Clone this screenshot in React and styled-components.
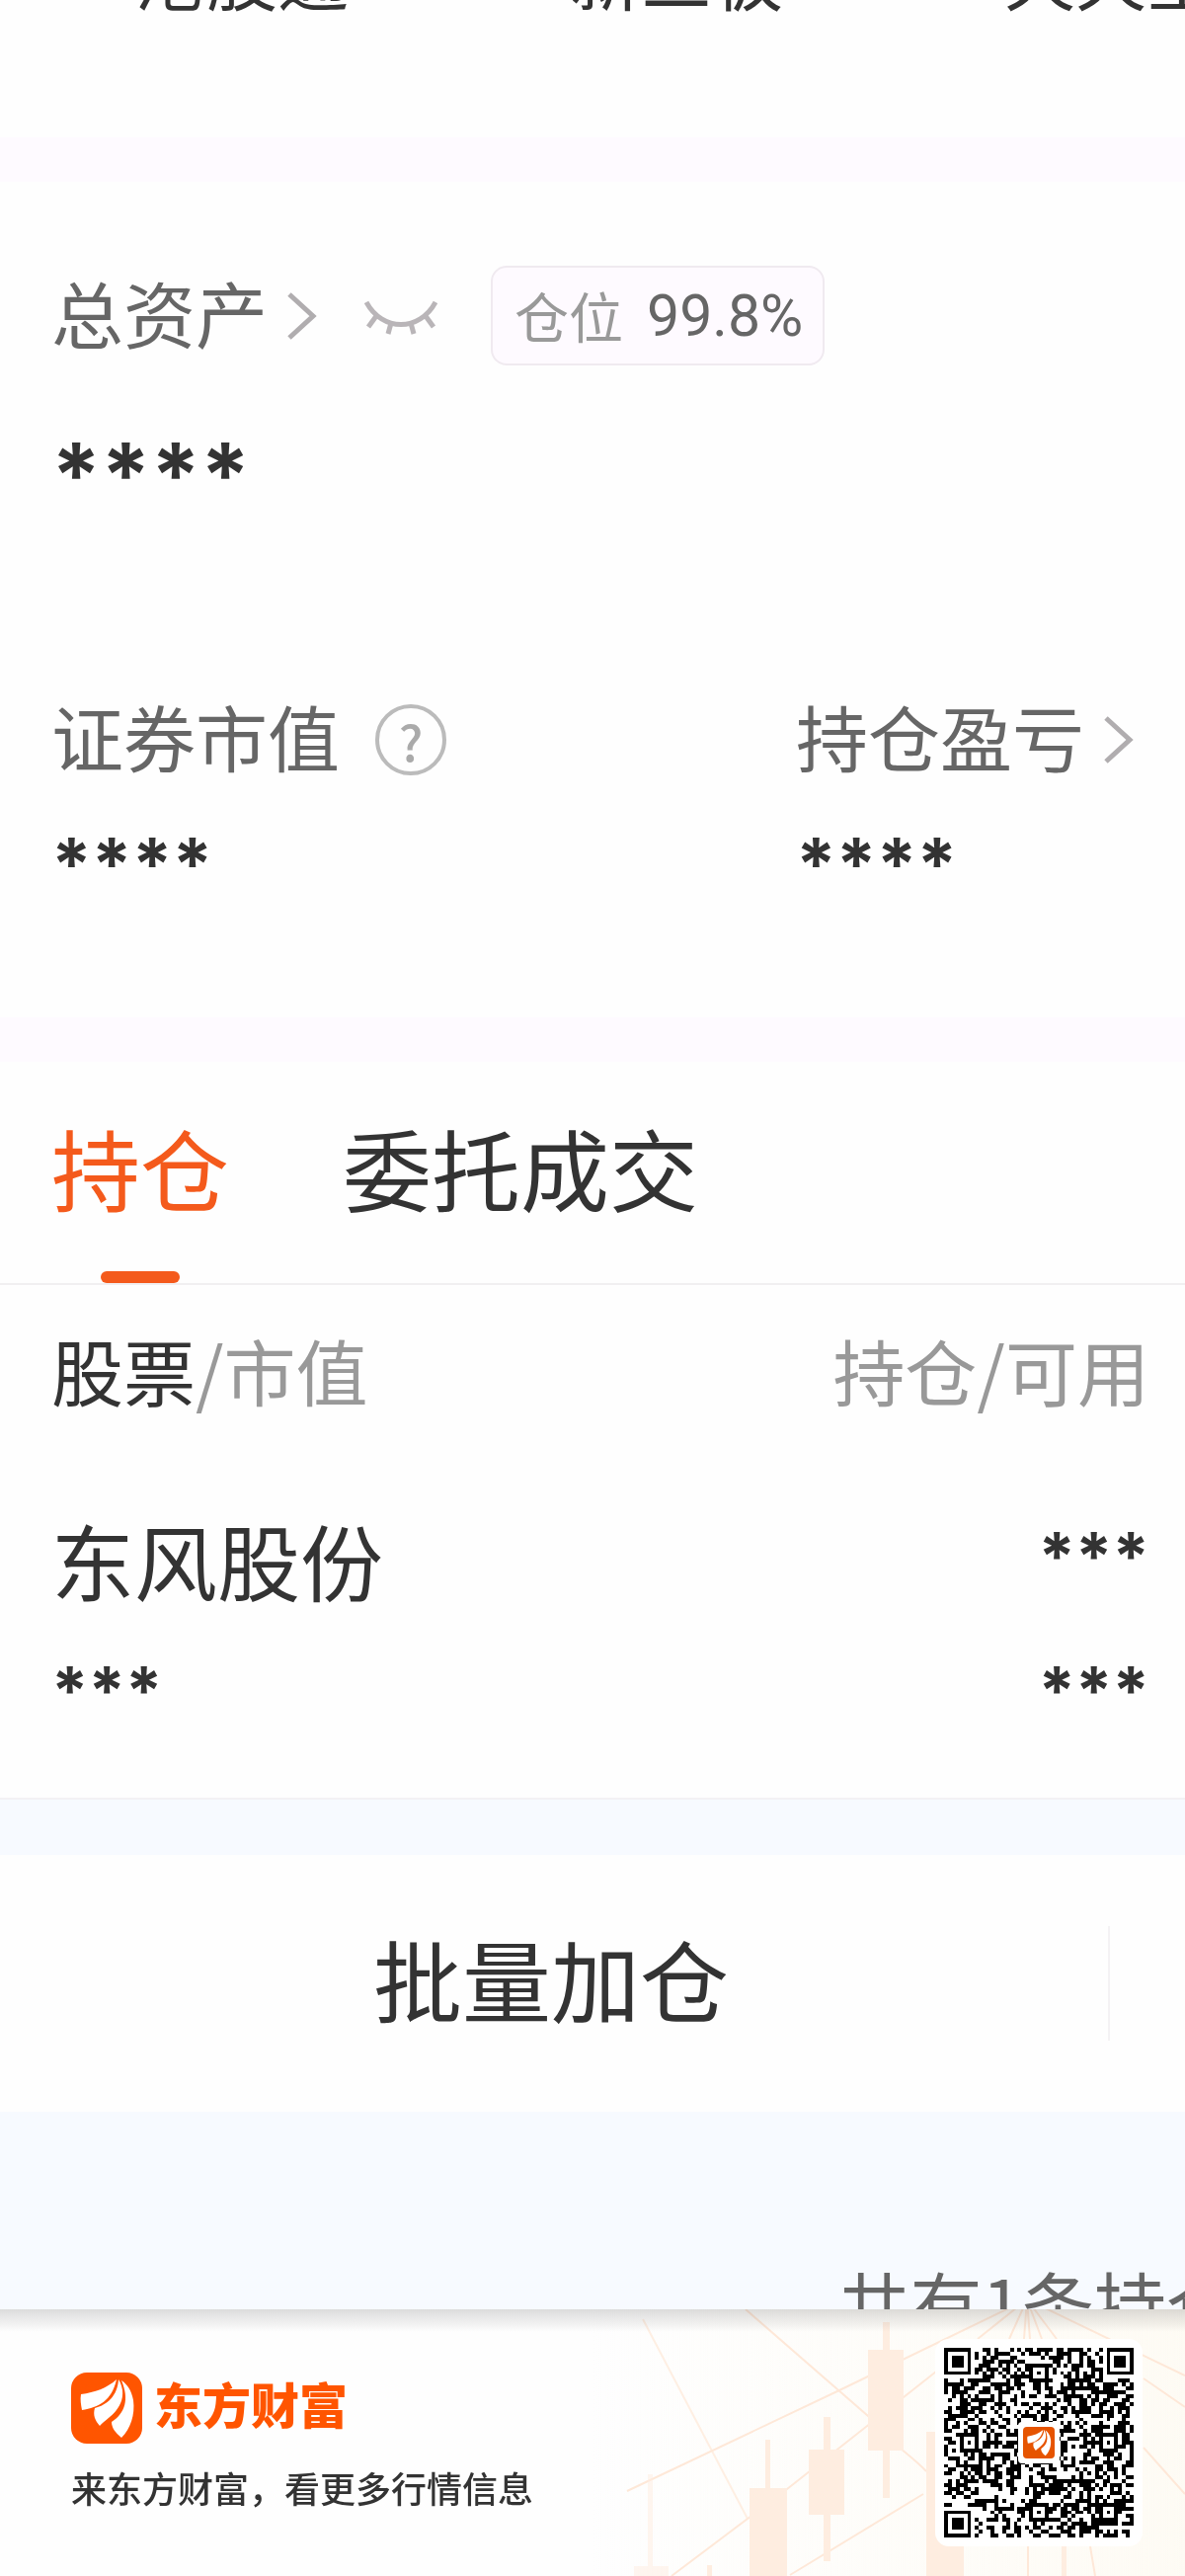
import React, { useState } from "react";

import styled, { createGlobalStyle } from "styled-components";

const QR_SIZE = 49;
const ALIGN = [6, 24, 42];

const holdings = [{ name: "东风股份", value: "***", amount: "***", usable: "***" }];

// finder, timing and alignment patterns, data modules fill the rest
const isDark = (x, y, seedBit) => {
  const last = QR_SIZE - 7;
  const corners = [
    [0, 0],
    [last, 0],
    [0, last],
  ];
  for (const [cx, cy] of corners) {
    const d = Math.max(Math.abs(x - cx - 3), Math.abs(y - cy - 3));
    if (d <= 4) return d !== 4 && d !== 2;
  }
  for (const ax of ALIGN) {
    for (const ay of ALIGN) {
      if ((ax === 6 && ay !== 24) || (ay === 6 && ax !== 24)) continue;
      const d = Math.max(Math.abs(x - ax), Math.abs(y - ay));
      if (d <= 2) return d !== 1;
    }
  }
  if (x === 6 || y === 6) return (x + y) % 2 === 0;
  return seedBit;
};

const buildQr = () => {
  let seed = 20817;
  let path = "";
  for (let y = 0; y < QR_SIZE; y++) {
    for (let x = 0; x < QR_SIZE; x++) {
      seed = (seed * 1103515245 + 12345) % 2147483648;
      if (isDark(x, y, seed / 2147483648 > 0.48)) path += `M${x} ${y}h1v1h-1z`;
    }
  }
  return path;
};

const qrPath = buildQr();

const Feathers = () => (
  <g fill="#fff">
    <path d="M46 7C36 16 24 20 10 22C9 27 10 33 11 38C28 35 41 29 46 7Z" />
    <path d="M48 7C47 24 36 33 24 36C22 43 24 48 29 54C35 47 54 38 52 18C51 13 50 10 48 7Z" />
    <path d="M51 8C59 27 55 41 41 50C41 56 45 61 51 66C60 57 65 43 63 28C61 18 57 12 51 8Z" />
  </g>
);

const Chevron = () => (
  <svg width="30" height="48" viewBox="0 0 30 48" fill="none" stroke="#b0adaf" strokeWidth="5">
    <path d="M2 2L26 24L2 46" />
  </svg>
);

const ClosedEye = () => (
  <svg width="74" height="36" viewBox="0 0 74 36" fill="none" stroke="#b9b5b8" strokeWidth="5">
    <path d="M2 2C18 32 56 32 72 2M12 16L4 27M27 23L24 34M47 23L50 34M62 16L70 27" />
  </svg>
);

const CandleArt = () => (
  <Art viewBox="0 0 600 270" aria-hidden="true">
    <defs>
      <linearGradient id="warm" x1="0" x2="1" y1="0" y2="0">
        <stop offset="0" stopColor="#fffcf5" stopOpacity="0" />
        <stop offset="1" stopColor="#fffcf5" />
      </linearGradient>
    </defs>
    <rect width="600" height="270" fill="url(#warm)" />
    <g fill="none" stroke="#ffe9d9" strokeWidth="2">
      <path d="M51 10L157 212" opacity="0.7" />
      <path d="M155 0L279 108C300 135 320 145 338 164" />
      <path d="M35 184L250 82L440 -10M80 270L197 182L348 63M200 269L335 187" />
      <path d="M440 -10L390 30M440 -10L422 30M440 -10L437 30M440 -10L443 30M440 -10L455 30M440 -10L470 30M440 -10L600 67" />
      <path d="M558 70L600 99M558 140L600 187M441 240V270M504 240L509 270" />
    </g>
    <g fill="#ffeee1">
      <path d="M294 13h7v28h14v102h-14v48h-7v-48h-15V41h15z" />
      <path d="M234 109h7v33h14v66h-14v47h-7v-47h-15v-66h15z" />
      <path d="M175 132h5v49h17v89h-38v-89h16z" />
      <path d="M338 124h38v146h-38zM475 240h5v30h-5zM116 259h5v11h-5z" />
      <path d="M56 167h5v93h16v10H42v-10h14z" opacity="0.5" />
    </g>
  </Art>
);

const App = () => {
  const [tab, setTab] = useState("hold");

  return (
    <Page>
      <GlobalStyle />
      <Markets>
        <a href="#hk">港股通</a>
        <a href="#neeq">新三板</a>
        <a href="#ttb">天天宝</a>
      </Markets>
      <Band />
      <Assets>
        <TotalRow>
          <LinkButton>
            <Label>总资产</Label>
            <Chevron />
          </LinkButton>
          <IconButton aria-label="显示资产">
            <ClosedEye />
          </IconButton>
          <Position>
            <span>仓位</span>
            <strong>99.8%</strong>
          </Position>
        </TotalRow>
        <Total>
          <Masked $size="big">****</Masked>
        </Total>
        <Figures>
          <div>
            <FigureHead>
              <Label>证券市值</Label>
              <Help aria-label="证券市值说明">?</Help>
            </FigureHead>
            <Masked $size="mid">****</Masked>
          </div>
          <div>
            <FigureHead>
              <LinkButton>
                <Label>持仓盈亏</Label>
                <Chevron />
              </LinkButton>
            </FigureHead>
            <Masked $size="mid">****</Masked>
          </div>
        </Figures>
      </Assets>
      <Band />
      <Tabs>
        <Tab $active={tab === "hold"} onClick={() => setTab("hold")}>
          持仓
        </Tab>
        <Tab $active={tab === "deal"} onClick={() => setTab("deal")}>
          委托成交
        </Tab>
      </Tabs>
      <Table>
        <thead>
          <tr>
            <th>
              <b>股票</b>/市值
            </th>
            <th>持仓/可用</th>
          </tr>
        </thead>
        <tbody>
          {holdings.map((item) => (
            <tr key={item.name}>
              <td>
                <StockName>{item.name}</StockName>
                <Masked $size="small">{item.value}</Masked>
              </td>
              <td>
                <Masked $size="small" $tall>
                  {item.amount}
                </Masked>
                <Masked $size="small">{item.usable}</Masked>
              </td>
            </tr>
          ))}
        </tbody>
      </Table>
      <Actions>
        <button>批量加仓</button>
      </Actions>
      <Summary>
        <p>共有1条持仓</p>
      </Summary>
      <Footer>
        <CandleArt />
        <Promo>
          <Brand>
            <svg width="72" height="72" viewBox="0 0 72 72">
              <rect width="72" height="72" rx="16" fill="#f50" />
              <Feathers />
            </svg>
            <Label>东方财富</Label>
          </Brand>
          <p>来东方财富，看更多行情信息</p>
        </Promo>
        <QrCard>
          <svg width="192" height="192" viewBox="0 0 192 192" role="img" aria-label="二维码">
            <g transform="scale(3.918)" shapeRendering="crispEdges">
              <path d={qrPath} />
            </g>
            <rect x="75" y="75" width="42" height="42" rx="4" fill="#fff" />
            <rect x="80" y="80" width="32" height="32" rx="4" fill="#e65400" />
            <g transform="translate(80 80) scale(0.444)">
              <Feathers />
            </g>
          </svg>
        </QrCard>
      </Footer>
    </Page>
  );
};

const GlobalStyle = createGlobalStyle`
  * {
    box-sizing: border-box;
  }
  body {
    margin: 0;
    background: #fff;
  }
  p {
    margin: 0;
  }
  button {
    border: none;
    padding: 0;
    background: transparent;
    font: inherit;
    color: inherit;
    cursor: pointer;
  }
  svg {
    display: block;
    flex-shrink: 0;
  }
`;

const Page = styled.main`
  width: 100%;
  overflow: hidden;
  background: #fefefe;
  color: #333;
  font-family: "Noto Sans CJK SC", sans-serif;
  font-size: 73px;
  line-height: 100px;
`;

const Markets = styled.nav`
  display: flex;
  height: 139px;
  padding-left: 25px;
  overflow: hidden;

  a {
    flex: 0 0 440px;
    margin-top: -76px;
    color: #333;
    font-size: 72px;
    text-align: center;
    text-decoration: none;
  }
`;

const Band = styled.div`
  height: 45px;
  background: #fefaff;
`;

const Assets = styled.section`
  height: 846px;
  padding: 85px 52px 0;
  color: #666;
`;

const Label = styled.span`
  padding-bottom: 10px;
  white-space: nowrap;
`;

const TotalRow = styled.div`
  display: flex;
  align-items: center;
  height: 101px;
`;

const LinkButton = styled.button`
  display: flex;
  align-items: center;
  gap: 20px;
`;

const IconButton = styled.button`
  margin: 4px 54px 0 48px;
`;

const Position = styled.div`
  display: flex;
  align-items: center;
  gap: 24px;
  height: 101px;
  padding: 0 20px 0 22px;
  border: 2px solid #f0eaf0;
  border-radius: 16px;
  background: #fefaff;
  color: #999;
  font-size: 55px;

  span {
    padding-bottom: 4px;
  }
  strong {
    color: #666;
    font-family: Roboto, sans-serif;
    font-size: 59px;
    font-weight: 400;
  }
`;

const sizes = { big: 90, mid: 73, small: 67 };

const Masked = styled.p`
  height: ${(props) => (props.$tall ? 136 : 100)}px;
  color: #333;
  font-family: Inter, sans-serif;
  font-size: ${(props) => sizes[props.$size]}px;
  font-weight: 700;
  line-height: 100px;
`;

const Total = styled.div`
  padding-top: 61px;
`;

const Figures = styled.div`
  display: grid;
  grid-template-columns: 754px 1fr;
  margin-top: 168px;
`;

const FigureHead = styled.div`
  display: flex;
  align-items: center;
  gap: 36px;
  height: 100px;
  margin-bottom: 26px;
`;

const Help = styled.button`
  width: 72px;
  height: 72px;
  border: 4px solid #bbb;
  border-radius: 50%;
  color: #aaa;
  font-size: 50px;
  font-weight: 500;
  line-height: 60px;
`;

const Tabs = styled.div`
  display: flex;
  gap: 115px;
  height: 226px;
  padding: 0 52px;
  border-bottom: 2px solid #f1eff1;
`;

const Tab = styled.button`
  position: relative;
  padding-bottom: 12px;
  color: ${(props) => (props.$active ? "#f45a1c" : "#333")};
  font-size: 90px;

  &::after {
    content: "";
    display: ${(props) => (props.$active ? "block" : "none")};
    position: absolute;
    bottom: 0;
    left: 50%;
    width: 80px;
    height: 12px;
    margin-left: -40px;
    border-radius: 6px;
    background: #f45a1c;
  }
`;

const Table = styled.table`
  width: 100%;
  border-collapse: collapse;
  border-bottom: 2px solid #f3f1f4;

  th {
    height: 181px;
    padding: 0 36px 12px 52px;
    color: #999;
    font-weight: 400;
    text-align: left;
  }
  td {
    height: 339px;
    padding: 44px 36px 0 52px;
    vertical-align: top;
  }
  th:last-child,
  td:last-child {
    text-align: right;
  }
  b {
    color: #333;
    font-weight: 400;
  }
`;

const StockName = styled.p`
  height: 136px;
  font-size: 84px;
  line-height: 106px;
`;

const Actions = styled.div`
  display: flex;
  align-items: center;
  padding-right: 76px;
  border-top: 56px solid #f7faff;

  button {
    flex: 1;
    height: 260px;
    padding: 0 6px 12px 0;
    font-size: 90px;
  }

  &::after {
    content: "";
    width: 2px;
    height: 116px;
    background: #f4f2f4;
  }
`;

const Summary = styled.section`
  display: flex;
  justify-content: flex-end;
  height: 200px;
  padding-top: 142px;
  overflow: hidden;
  background: #f7faff;
  color: #666;

  p {
    flex-shrink: 0;
    margin-right: -54px;
  }
`;

const Footer = styled.footer`
  display: flex;
  position: relative;
  justify-content: space-between;
  align-items: center;
  height: 270px;
  padding: 0 43px 0 72px;
  background: linear-gradient(#dcdcdc, #f3f3f3 16px, #fefefe 23px);
`;

const Art = styled.svg`
  position: absolute;
  right: 0;
  bottom: 0;
  width: 600px;
  height: 270px;
  mix-blend-mode: multiply;
`;

const Promo = styled.div`
  font-size: 36px;
  font-weight: 500;
  line-height: 52px;
`;

const Brand = styled.div`
  display: flex;
  align-items: center;
  gap: 12px;
  margin-bottom: 18px;
  color: #f50;
  font-size: 49px;
  font-weight: 900;
`;

const QrCard = styled.div`
  position: relative;
  padding: 9px;
  border-radius: 14px;
  background: #fff;
`;

export default App;
